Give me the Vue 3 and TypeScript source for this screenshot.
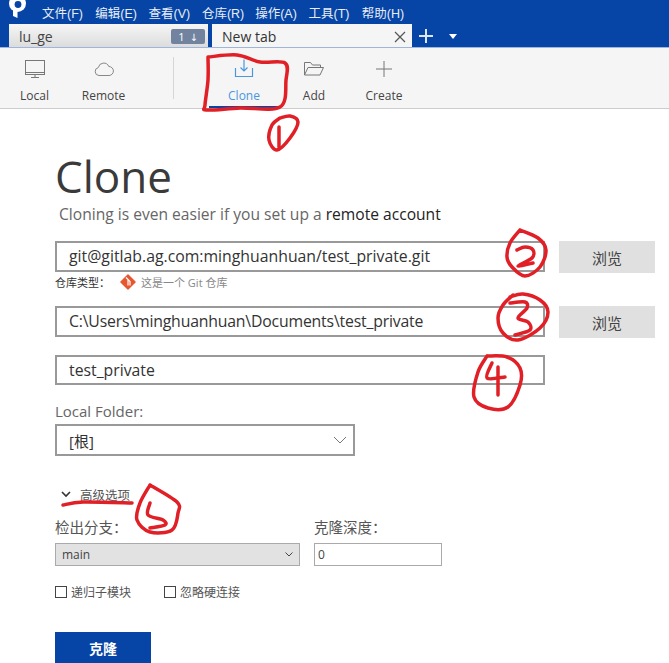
<script setup lang="ts">
const menus = ['文件(F)', '编辑(E)', '查看(V)', '仓库(R)', '操作(A)', '工具(T)', '帮助(H)']

type Pt = [number, number]

// Smooth pen stroke through hand-picked points (Catmull-Rom to Bezier).
function pen(pts: Pt[]): string {
  let d = `M${pts[0][0]} ${pts[0][1]}`
  for (let i = 0; i < pts.length - 1; i++) {
    const p0 = pts[Math.max(i - 1, 0)]
    const p1 = pts[i]
    const p2 = pts[i + 1]
    const p3 = pts[Math.min(i + 2, pts.length - 1)]
    const c1x = p1[0] + (p2[0] - p0[0]) / 6
    const c1y = p1[1] + (p2[1] - p0[1]) / 6
    const c2x = p2[0] - (p3[0] - p1[0]) / 6
    const c2y = p2[1] - (p3[1] - p1[1]) / 6
    d += `C${c1x.toFixed(1)} ${c1y.toFixed(1)} ${c2x.toFixed(1)} ${c2y.toFixed(1)} ${p2[0]} ${p2[1]}`
  }
  return d
}

const strokes: string[] = [
  pen([[208, 57], [237, 55], [260, 62], [285, 63], [286, 80], [280, 107], [240, 108], [207, 110], [205, 105], [208, 80], [208, 57]]),
  pen([[280, 118], [290, 116], [298, 122], [290, 138], [277, 150], [269, 140], [272, 125], [280, 118]]),
  pen([[279, 127], [279, 147]]),
  pen([[520, 230], [538, 238], [546, 250], [540, 267], [525, 276], [512, 267], [507, 257], [510, 243], [520, 230]]),
  pen([[517, 250], [525, 247], [533, 250], [532, 258], [518, 266], [533, 263]]),
  pen([[510, 297], [523, 294], [540, 300], [548, 312], [540, 328], [518, 340], [503, 333], [498, 318], [503, 305], [513, 295]]),
  pen([[510, 303], [525, 302], [527, 308], [518, 318], [528, 322], [530, 330], [515, 335]]),
  pen([[487, 356], [507, 357], [520, 368], [520, 385], [508, 407], [488, 408], [474, 397], [478, 372], [487, 356]]),
  pen([[492, 363], [487, 378], [505, 377]]),
  pen([[498, 367], [498, 395]]),
  pen([[150, 485], [177, 502], [178, 513], [172, 530], [150, 532], [137, 520], [140, 503], [150, 485]]),
  pen([[150, 503], [148, 515], [163, 520], [165, 525], [150, 528]]),
  pen([[63, 505], [83, 502], [132, 503]]),
]
</script>

<template>
  <div class="app">
    <header class="top">
      <div class="menubar">
        <svg class="logo" width="20" height="20" viewBox="0 0 20 20" fill="#fff">
          <circle cx="11.500" cy="3.500" r="8.500" />
          <path d="M7 8v8l4.500 2v-8z" />
          <circle cx="12" cy="4.500" r="3.400" fill="#0645a5" />
        </svg>
        <span v-for="m in menus" :key="m" class="menu">{{ m }}</span>
      </div>
      <div class="tabs">
        <div class="tab repo">
          <span>lu_ge</span>
          <span class="badge">1 <span class="arrow">↓</span></span>
        </div>
        <div class="tab active">
          <span>New tab</span>
          <svg width="12" height="12" viewBox="0 0 12 12"><path d="M1 1l10 10M11 1L1 11" stroke="#555" stroke-width="1.200" /></svg>
        </div>
        <svg class="plus" width="16" height="16" viewBox="0 0 16 16"><path d="M8 1v14M1 8h14" stroke="#dbe6f7" stroke-width="2" /></svg>
        <svg class="caret" width="8" height="5" viewBox="0 0 8 5"><path d="M0 0h8L4 5z" fill="#fff" /></svg>
      </div>
    </header>

    <nav class="toolbar">
      <div class="tool">
        <svg width="22" height="22" viewBox="0 0 22 22" fill="none" stroke="#777"><rect x="1.500" y="2.500" width="19" height="14" /><path d="M1.500 14.500h19M11 17v2M7 19.500h8" /></svg>
        <span>Local</span>
      </div>
      <div class="tool">
        <svg width="22" height="22" viewBox="0 0 22 22" fill="none" stroke="#888"><path d="M6 17.500a4 4 0 0 1-.7-7.900A5.500 5.500 0 0 1 15.800 8.500a4.500 4.500 0 0 1 .2 9z" /></svg>
        <span>Remote</span>
      </div>
      <div class="divider"></div>
      <div class="tool selected">
        <svg width="22" height="22" viewBox="0 0 22 22" fill="none" stroke="#4a97e0" stroke-width="1.200"><path d="M2.500 10v8.500h17V10M11 1.500v11M7.500 9.500l3.500 3.500 3.500-3.500" /></svg>
        <span>Clone</span>
      </div>
      <div class="tool">
        <svg width="22" height="22" viewBox="0 0 22 22" fill="none" stroke="#777"><path d="M1.500 17V4.500h6l2 2.500h8v2.500M1.500 17l3.500-7.500h15.500L17 17z" /></svg>
        <span>Add</span>
      </div>
      <div class="tool">
        <svg width="22" height="22" viewBox="0 0 22 22" fill="none" stroke="#777"><path d="M11 3v16M3 11h16" /></svg>
        <span>Create</span>
      </div>
    </nav>

    <main class="content">
      <h1>Clone</h1>
      <p class="sub">Cloning is even easier if you set up a <span>remote account</span></p>

      <div class="row">
        <div class="field">git@gitlab.ag.com:minghuanhuan/test_private.git</div>
        <button class="browse">浏览</button>
      </div>
      <div class="repo-type">
        <span class="rt-label">仓库类型：</span>
        <svg width="16" height="16" viewBox="0 0 16 16"><path d="M8 1l7 7-7 7-7-7z" fill="#e8562f" stroke="#e8562f" stroke-width="1.500" stroke-linejoin="round" /><path d="M6 3.500l4 4v4M8 5.500v6" stroke="#fff" stroke-width="1.200" fill="none" /></svg>
        <span class="rt-text">这是一个 Git 仓库</span>
      </div>
      <div class="row second">
        <div class="field path">C:\Users\minghuanhuan\Documents\test_private</div>
        <button class="browse">浏览</button>
      </div>
      <div class="field name">test_private</div>

      <label class="folder-label">Local Folder:</label>
      <div class="folder">
        <span>[根]</span>
        <svg width="14" height="8" viewBox="0 0 14 8" fill="none" stroke="#777"><path d="M1 1l6 6 6-6" /></svg>
      </div>

      <div class="advanced">
        <svg width="10" height="7" viewBox="0 0 10 7" fill="none" stroke="#333" stroke-width="1.600"><path d="M1 1l4 4 4-4" /></svg>
        <span>高级选项</span>
      </div>

      <div class="adv-grid">
        <div class="col-branch">
          <div class="adv-label">检出分支：</div>
          <div class="branch">
            <span>main</span>
            <svg width="8" height="5" viewBox="0 0 8 5" fill="none" stroke="#444"><path d="M.5.500L4 4 7.500.500" /></svg>
          </div>
        </div>
        <div class="col-depth">
          <div class="adv-label">克隆深度：</div>
          <div class="depth">0</div>
        </div>
      </div>

      <div class="checks">
        <label class="check"><i></i>递归子模块</label>
        <label class="check"><i></i>忽略硬连接</label>
      </div>

      <button class="primary">克隆</button>
    </main>

    <svg class="ink" width="669" height="663" viewBox="0 0 669 663" fill="none" stroke="#e01f26" stroke-width="3.500" stroke-linecap="round" stroke-linejoin="round">
      <path v-for="(d, i) in strokes" :key="i" :d="d" />
    </svg>
  </div>
</template>

<style scoped>
.app {
  position: relative;
  width: 669px;
  height: 663px;
  overflow: hidden;
  background: #fff;
  font-family: "Open Sans", "Noto Sans CJK SC", sans-serif;
  color: #333;
}
.top {
  height: 47px;
  background: #0645a5;
}
.menubar {
  height: 24px;
  display: flex;
  align-items: center;
  padding-left: 6px;
  overflow: hidden;
}
.logo {
  flex: none;
  margin-right: 16px;
  margin-top: -4px;
}
.menu {
  width: 53.300px;
  font-size: 12.500px;
  color: #e6edf8;
  font-family: "Liberation Sans", "Noto Sans CJK SC", sans-serif;
  white-space: nowrap;
}
.tabs {
  height: 23px;
  display: flex;
  padding-left: 9px;
  position: relative;
}
.tab {
  height: 23px;
  display: flex;
  align-items: center;
  justify-content: space-between;
  font-size: 14px;
  box-sizing: border-box;
  padding-top: 2px;
}
.repo {
  width: 199px;
  padding-left: 10px;
  padding-right: 3px;
  background: linear-gradient(#f6f6f6, #dcdcdc);
  color: #444;
}
.badge {
  width: 34px;
  height: 15px;
  line-height: 15px;
  font-size: 11px;
  background: #71839f;
  color: #fff;
  border-radius: 2px;
  text-align: center;
  word-spacing: 2px;
}
.arrow {
  font-family: "DejaVu Sans", sans-serif;
  font-size: 10px;
}
.active {
  width: 200px;
  margin-left: 4px;
  padding-left: 10px;
  padding-right: 6px;
  background: #f5f5f5;
  box-shadow: -2px 0 0 #0645a5;
}
.plus {
  margin: 4px 0 0 6px;
}
.caret {
  margin: 10px 0 0 15px;
}
.toolbar {
  height: 62px;
  box-sizing: border-box;
  display: flex;
  background: #f5f5f5;
  border-top: 1px solid #9fb6dc;
  border-bottom: 1px solid #ccc;
}
.tool {
  width: 70px;
  height: 60px;
  box-sizing: border-box;
  padding-top: 10px;
  display: flex;
  flex-direction: column;
  align-items: center;
  gap: 7px;
  font-size: 12px;
  color: #444;
}
.tool:first-child {
  width: 69px;
}
.tool:nth-child(2) {
  width: 69px;
}
.divider {
  width: 1px;
  height: 42px;
  margin: 9px 35px 0 35px;
  background: #d6d6d6;
}
.selected {
  color: #4a97e0;
  border-bottom: 2px solid #0645a5;
}
.content {
  padding-left: 55px;
}
h1 {
  margin: 39px 0 0;
  font-size: 44px;
  line-height: 56px;
  font-weight: 400;
  color: #3a3a3a;
}
.sub {
  margin: 0 0 0 4px;
  font-size: 15.600px;
  line-height: 20px;
  color: #666;
}
.sub span {
  color: #222;
}
.row {
  display: flex;
  margin-top: 17px;
  gap: 14px;
}
.row.second {
  margin-top: 15px;
}
.field {
  width: 490px;
  height: 31px;
  box-sizing: border-box;
  border: 2px solid #999;
  padding-left: 12px;
  line-height: 27px;
  font-size: 15.800px;
  color: #333;
}
.path {
  letter-spacing: -0.18px;
}
.name {
  height: 30px;
  margin-top: 17px;
  line-height: 26px;
}
.browse {
  width: 96px;
  height: 32px;
  border: 0;
  background: #e0e0e0;
  font: 15px "Noto Sans CJK SC", sans-serif;
  color: #444;
}
.repo-type {
  display: flex;
  align-items: center;
  height: 18px;
  margin-top: 0;
  font-size: 11px;
}
.rt-label {
  width: 65px;
  color: #333;
}
.rt-text {
  margin-left: 5px;
  color: #888;
}
.folder-label {
  display: block;
  margin-top: 16px;
  font-size: 15px;
  line-height: 20px;
  color: #666;
}
.folder {
  width: 300px;
  height: 32px;
  margin-top: 3px;
  box-sizing: border-box;
  border: 2px solid #999;
  padding: 0 6px 0 12px;
  display: flex;
  align-items: center;
  justify-content: space-between;
  font-size: 15px;
}
.advanced {
  display: flex;
  align-items: center;
  gap: 9px;
  height: 20px;
  margin: 28px 0 0 6px;
  font-size: 12.500px;
  color: #555;
}
.adv-grid {
  display: flex;
  gap: 14px;
  margin-top: 12px;
}
.adv-label {
  height: 27px;
  line-height: 24px;
  font-size: 14.500px;
  color: #555;
}
.col-branch {
  width: 245px;
}
.col-depth {
  width: 128px;
}
.branch {
  height: 23px;
  box-sizing: border-box;
  border: 1px solid #aaa;
  background: #e2e2e2;
  padding: 0 6px;
  display: flex;
  align-items: center;
  justify-content: space-between;
  font-size: 12px;
  color: #444;
}
.depth {
  height: 23px;
  box-sizing: border-box;
  border: 1px solid #aaa;
  padding-left: 3px;
  line-height: 21px;
  font-size: 12px;
  color: #444;
}
.checks {
  display: flex;
  gap: 33px;
  margin-top: 18px;
}
.check {
  display: flex;
  align-items: center;
  gap: 4px;
  height: 16px;
  font-size: 12px;
  color: #555;
}
.check i {
  width: 10px;
  height: 10px;
  border: 1px solid #444;
}
.primary {
  display: block;
  width: 96px;
  height: 31px;
  margin-top: 32px;
  border: 0;
  background: #0645a5;
  color: #fff;
  font: 700 14px "Noto Sans CJK SC", sans-serif;
}
.ink {
  position: absolute;
  left: 0;
  top: 0;
  pointer-events: none;
}
</style>
